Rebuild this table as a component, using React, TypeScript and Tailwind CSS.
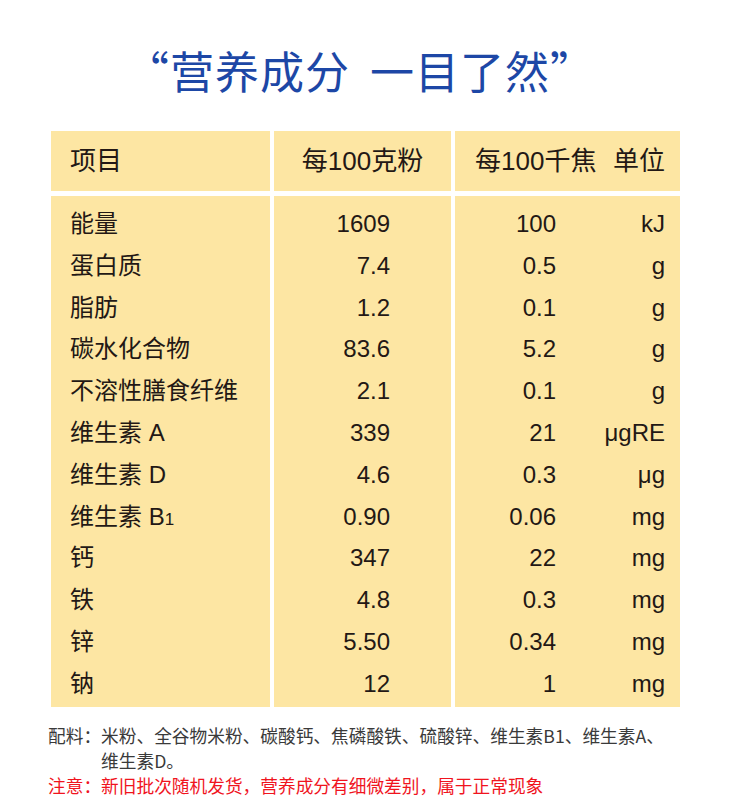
const rows: [string, string, string, string][] = [
  ["能量", "1609", "100", "kJ"],
  ["蛋白质", "7.4", "0.5", "g"],
  ["脂肪", "1.2", "0.1", "g"],
  ["碳水化合物", "83.6", "5.2", "g"],
  ["不溶性膳食纤维", "2.1", "0.1", "g"],
  ["维生素 A", "339", "21", "μgRE"],
  ["维生素 D", "4.6", "0.3", "μg"],
  ["维生素 B", "0.90", "0.06", "mg"],
  ["钙", "347", "22", "mg"],
  ["铁", "4.8", "0.3", "mg"],
  ["锌", "5.50", "0.34", "mg"],
  ["钠", "12", "1", "mg"],
];

const font = { fontFamily: '"Liberation Sans", "Noto Sans CJK SC", sans-serif' };

export default function App() {
  return (
    <div className="w-[730px] h-[811px] bg-white text-[#231815]" style={font}>
      <div className="pt-[44px] pr-[10px] flex justify-center">
        <h1
          className="text-[44px] leading-[52px] font-normal text-[#1d47a6] tracking-[1px]"
          style={{ fontFamily: '"Noto Sans CJK SC", sans-serif' }}
        >
          “营养成分<span className="inline-block w-[20px]"></span>一目了然”
        </h1>
      </div>

      <div className="mt-[35px] ml-[51px] w-[629px] grid grid-cols-[219px_177px_225px] gap-x-[4px] gap-y-[5px]">
        <div className="h-[60px] bg-[#fde6a3] flex items-center pl-[19px] text-[26px]">项目</div>
        <div className="h-[60px] bg-[#fde6a3] flex items-center justify-center text-[26px]">每100克粉</div>
        <div className="h-[60px] bg-[#fde6a3] flex items-center justify-between pl-[20px] pr-[15px] text-[26px]">
          <span>每100千焦</span>
          <span>单位</span>
        </div>

        <div className="h-[511px] bg-[#fde6a3] pt-[7px] pl-[19px] text-[24px]">
          {rows.map((r, i) => (
            <div key={i} className="h-[41.8px] leading-[41.8px]">
              {r[0]}
              {i === 7 && <span className="text-[17px]">1</span>}
            </div>
          ))}
        </div>
        <div className="h-[511px] bg-[#fde6a3] pt-[7px] pr-[61px] text-[24px] text-right">
          {rows.map((r, i) => (
            <div key={i} className="h-[41.8px] leading-[41.8px]">{r[1]}</div>
          ))}
        </div>
        <div className="h-[511px] bg-[#fde6a3] pt-[7px] pr-[15px] text-[24px]">
          {rows.map((r, i) => (
            <div key={i} className="h-[41.8px] leading-[41.8px] flex">
              <span className="w-[101px] text-right">{r[2]}</span>
              <span className="flex-1 text-right">{r[3]}</span>
            </div>
          ))}
        </div>
      </div>

      <div
        className="mt-[16px] pl-[48px] text-[17.7px] leading-[25px]"
        style={{ fontFamily: '"Noto Sans CJK SC", sans-serif' }}
      >
        <div className="flex text-[#3a3a3a]">
          <span className="shrink-0">配料：</span>
          <span>
            米粉、全谷物米粉、碳酸钙、焦磷酸铁、硫酸锌、维生素B1、维生素A、
            <br />
            维生素D。
          </span>
        </div>
        <div className="text-[#f0141e]">注意：新旧批次随机发货，营养成分有细微差别，属于正常现象</div>
      </div>
    </div>
  );
}
